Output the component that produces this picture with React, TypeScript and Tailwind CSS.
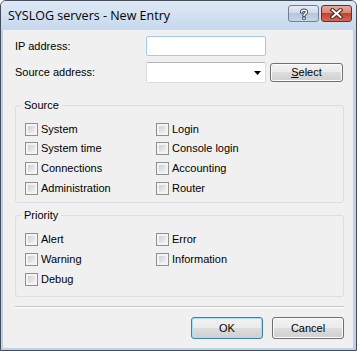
import React from "react";

const body = { fontFamily: '"Liberation Sans", Arial, sans-serif' };

function CheckBox({ label }: { label: string }) {
  return (
    <div className="flex items-center h-[13px]">
      <span className="w-[13px] h-[13px] border border-[#8e8f8f] bg-[#f4f4f4] p-[2px] shrink-0">
        <span className="block w-full h-full bg-gradient-to-br from-[#cdd0d6] to-[#f3f3f3]" />
      </span>
      <span className="ml-[3px] text-[11px] leading-none text-black whitespace-nowrap">{label}</span>
    </div>
  );
}

function GroupBox({
  title,
  rows,
  gaps,
  className,
}: {
  title: string;
  rows: [string, string?][];
  gaps: string[];
  className: string;
}) {
  return (
    <div className={`relative border border-[#d5dfe5] rounded-[3px] ${className}`}>
      <span className="absolute -top-[8px] left-[5px] px-[3px] bg-[#f0f0f0] text-[11px] leading-[14px] text-black">{title}</span>
      <div className="flex flex-col">
        {rows.map(([a, b], i) => (
          <div key={a} className={`flex ${gaps[i]}`}>
            <div className="ml-[9px] w-[131px]">
              <CheckBox label={a} />
            </div>
            {b && <CheckBox label={b} />}
          </div>
        ))}
      </div>
    </div>
  );
}

function WinButton({ children, primary, className }: { children: React.ReactNode; primary?: boolean; className: string }) {
  return (
    <button
      className={`rounded-[3px] border text-[11px] text-black leading-none ${
        primary ? "border-[#3c7fb1] shadow-[inset_0_0_0_1px_#9ee1f9]" : "border-[#707070] shadow-[inset_0_0_0_1px_#fbfbfb]"
      } bg-[linear-gradient(to_bottom,#f2f2f2_0%,#ebebeb_50%,#dddddd_50%,#cfcfcf_100%)] ${className}`}
    >
      {children}
    </button>
  );
}

export default function App() {
  return (
    <div className="w-[357px] h-[351px] bg-white overflow-hidden" style={body}>
      <div className="w-[357px] h-[351px] flex flex-col border border-[#434d5a] rounded-t-[6px] bg-[#bcd1ea] overflow-hidden">
        {/* title bar */}
        <div className="h-[29px] flex items-start bg-gradient-to-b from-[#dfe9f5] to-[#c6d8ee] shrink-0">
          <span
            className="ml-[7px] mt-[6px] text-[12.5px] text-black"
            style={{ fontFamily: '"Open Sans", "Noto Sans", sans-serif' }}
          >
            SYSLOG servers - New Entry
          </span>
          <div className="ml-auto mt-[4px] mr-[4px] flex gap-[2px]">
            <div className="w-[31px] h-[17px] rounded-[3px] border border-[#707f95] bg-[linear-gradient(to_bottom,#e4ebf4_0%,#cdd9e8_50%,#b5c6dc_50%,#c7d6e8_100%)] flex items-center justify-center">
              <svg width="10" height="12" viewBox="0 0 10 12">
                <path d="M2.5 4 C2.5 1.5 7.5 1.5 7.5 4 C7.5 5.6 5 5.8 5 7.5" fill="none" stroke="#3a4656" strokeWidth="3.4" strokeLinecap="round" />
                <rect x="3.3" y="8.7" width="3.4" height="3" fill="#3a4656" />
                <path d="M2.5 4 C2.5 1.5 7.5 1.5 7.5 4 C7.5 5.6 5 5.8 5 7.5" fill="none" stroke="#fff" strokeWidth="1.5" strokeLinecap="round" />
                <rect x="4.2" y="9.5" width="1.6" height="1.5" fill="#fff" />
              </svg>
            </div>
            <div className="w-[31px] h-[17px] rounded-[3px] border border-[#6e2a25] bg-[linear-gradient(to_bottom,#e8a89e_0%,#d9806f_50%,#c4412f_50%,#d26a55_100%)] flex items-center justify-center">
              <svg width="13" height="11" viewBox="0 0 13 11">
                <path d="M2.5 2 L10.5 9 M10.5 2 L2.5 9" stroke="#4a2420" strokeWidth="4" strokeLinecap="square" />
                <path d="M2.5 2 L10.5 9 M10.5 2 L2.5 9" stroke="#fff" strokeWidth="2" strokeLinecap="square" />
              </svg>
            </div>
          </div>
        </div>

        {/* client area */}
        <div className="flex-1 ml-[2px] mr-[3px] mb-[2px] bg-[#f0f0f0] pl-[12px] pr-[9px] pt-[6px] flex flex-col">
          <div className="flex items-center h-[20px]">
            <span className="w-[131px] text-[11px] text-black">IP address:</span>
            <div className="w-[120px] h-[20px] bg-white border border-[#a4c9ec] rounded-[2px]" />
          </div>
          <div className="flex items-center h-[21px] mt-[6px]">
            <span className="w-[131px] text-[11px] text-black">Source address:</span>
            <div className="w-[120px] h-[21px] bg-white border border-[#d9dce3] border-t-[#b3b6bc] rounded-[2px] flex items-center justify-end pr-[4px]">
              <svg width="7" height="4" viewBox="0 0 7 4">
                <path d="M0 0 H7 L3.5 4 Z" fill="#000" />
              </svg>
            </div>
            <WinButton className="ml-[4px] w-[73px] h-[19px]">
              <span className="underline">S</span>elect
            </WinButton>
          </div>

          <GroupBox
            title="Source"
            className="mt-[22px] h-[98px]"
            gaps={["mt-[17px]", "mt-[6px]", "mt-[7px]", "mt-[7px]"]}
            rows={[
              ["System", "Login"],
              ["System time", "Console login"],
              ["Connections", "Accounting"],
              ["Administration", "Router"],
            ]}
          />
          <GroupBox
            title="Priority"
            className="mt-[12px] h-[82px]"
            gaps={["mt-[17px]", "mt-[7px]", "mt-[7px]"]}
            rows={[["Alert", "Error"], ["Warning", "Information"], ["Debug"]]}
          />

          <div className="mt-[9px] h-[1px] bg-[#c8c8c8] border-b border-white box-content" />

          <div className="mt-[9px] flex justify-end gap-[9px]">
            <WinButton primary className="w-[72px] h-[22px]">OK</WinButton>
            <WinButton className="w-[72px] h-[22px]">Cancel</WinButton>
          </div>
        </div>
      </div>
    </div>
  );
}
